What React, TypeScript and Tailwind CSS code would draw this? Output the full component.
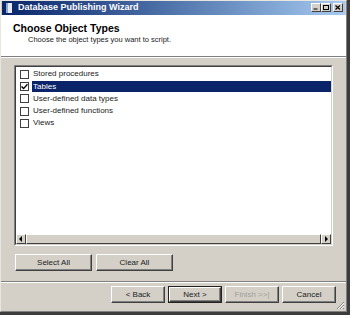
import React from "react";

const ITEMS = [
  { label: "Stored procedures", checked: false },
  { label: "Tables", checked: true },
  { label: "User-defined data types", checked: false },
  { label: "User-defined functions", checked: false },
  { label: "Views", checked: false },
];

function Check({ checked }: { checked: boolean }) {
  return (
    <div className="w-[9px] h-[9px] border border-[#404040] bg-white flex items-center justify-center shrink-0">
      {checked && (
        <svg width="7" height="7" viewBox="0 0 7 7">
          <path d="M0.5 3.5 L2.6 5.6 L6.5 1.2" stroke="#000" strokeWidth="1.4" fill="none" />
        </svg>
      )}
    </div>
  );
}

function Btn({
  children,
  w = "w-[77px]",
  def = false,
  disabled = false,
}: {
  children: React.ReactNode;
  w?: string;
  def?: boolean;
  disabled?: boolean;
}) {
  return (
    <div className={`${w} h-[17px] ${def ? "border border-[#222]" : ""}`}>
      <div className="h-full border border-t-white border-l-white border-r-[#404040] border-b-[#404040] bg-[#d4d0c8] shadow-[inset_-1px_-1px_0_#808080] flex items-center justify-center">
        <span className={`text-[8px] leading-none ${disabled ? "text-[#a19e96]" : "text-[#222]"}`}>
          {children}
        </span>
      </div>
    </div>
  );
}

export default function App() {
  return (
    <div className="w-[354px] h-[318px] bg-white" style={{ fontFamily: '"Liberation Sans", Arial, sans-serif' }}>
      <div className="w-[350px] h-[315px] border-r-[3px] border-b-[3px] border-r-[#3c3c3c] border-b-[#3c3c3c]">
        <div className="w-full h-full bg-[#d4d0c8] border border-t-[#e8e6e0] border-l-[#e8e6e0] border-r-[#808080] border-b-[#808080] flex flex-col">
          {/* Title bar */}
          <div className="h-[14px] mx-px bg-gradient-to-r from-[#0a246a] to-[#a6caf0] flex items-center pl-[4px] pr-[2px]">
            <div className="w-[6px] h-[10px] bg-[#e6ecf6] border-l-[2px] border-[#8fa6cc] mr-[6px]" />
            <span className="text-white font-bold text-[9px] leading-none">Database Publishing Wizard</span>
            <div className="ml-auto flex items-center">
              {["min", "max", "close"].map((k) => (
                <div
                  key={k}
                  className={`w-[10px] h-[9px] bg-[#d4d0c8] border border-t-white border-l-white border-r-[#404040] border-b-[#404040] flex items-center justify-center ${
                    k === "close" ? "ml-[2px]" : ""
                  }`}
                >
                  <svg width="6" height="5" viewBox="0 0 6 5">
                    {k === "min" && <rect x="0.5" y="3.5" width="4" height="1" fill="#000" />}
                    {k === "max" && (
                      <rect x="0.5" y="0.5" width="5" height="4" fill="none" stroke="#000" strokeWidth="1" />
                    )}
                    {k === "close" && <path d="M0.5 0.5 L5 4.5 M5 0.5 L0.5 4.5" stroke="#000" strokeWidth="1.2" />}
                  </svg>
                </div>
              ))}
            </div>
          </div>

          {/* Header */}
          <div className="h-[43px] bg-white border-b border-b-[#808080] pl-[12px] pt-[8px]">
            <div className="text-[10.5px] font-bold text-black leading-none">Choose Object Types</div>
            <div className="text-[7.5px] text-[#222] leading-none mt-[3px] pl-[15px]">
              Choose the object types you want to script.
            </div>
          </div>
          <div className="h-px bg-white" />

          {/* Body */}
          <div className="flex-1 flex flex-col px-[13px] pt-[7px]">
            <div className="h-[181px] border border-t-[#808080] border-l-[#808080] border-r-white border-b-white">
              <div className="h-full border border-t-[#404040] border-l-[#404040] border-r-[#d4d0c8] border-b-[#d4d0c8] bg-white flex flex-col">
                <div className="flex-1 pt-[1px]">
                  {ITEMS.map((it) => {
                    const sel = it.label === "Tables";
                    return (
                      <div key={it.label} className="h-[12.2px] flex items-center pl-[4px]">
                        <Check checked={it.checked} />
                        <div
                          className={`ml-[3px] flex-1 h-[11px] flex items-center pl-[1px] ${
                            sel ? "bg-[#0a246a] text-white" : "text-[#222]"
                          }`}
                        >
                          <span className="text-[8px] leading-none">{it.label}</span>
                        </div>
                      </div>
                    );
                  })}
                </div>
                {/* horizontal scrollbar */}
                <div className="h-[10px] flex bg-[#e6e3de]">
                  <div className="w-[10px] h-full bg-[#d4d0c8] border border-t-white border-l-white border-r-[#404040] border-b-[#404040] flex items-center justify-center">
                    <svg width="4" height="6" viewBox="0 0 4 6">
                      <path d="M3 0 L0 3 L3 6 Z" fill="#000" />
                    </svg>
                  </div>
                  <div className="flex-1 h-full bg-[#d4d0c8] border border-t-white border-l-white border-r-[#404040] border-b-[#404040]" />
                  <div className="w-[10px] h-full bg-[#d4d0c8] border border-t-white border-l-white border-r-[#404040] border-b-[#404040] flex items-center justify-center">
                    <svg width="4" height="6" viewBox="0 0 4 6">
                      <path d="M1 0 L4 3 L1 6 Z" fill="#000" />
                    </svg>
                  </div>
                </div>
              </div>
            </div>

            <div className="flex gap-[4px] mt-[8px] pl-[1px]">
              <Btn>Select All</Btn>
              <Btn>Clear All</Btn>
            </div>
          </div>

          {/* Separator */}
          <div className="h-px bg-[#808080] mt-[10px]" />
          <div className="h-px bg-white" />

          {/* Footer */}
          <div className="flex items-start justify-end gap-[3px] pr-[10px] pt-[3px] h-[28px] relative">
            <Btn w="w-[54px]">&lt; Back</Btn>
            <Btn w="w-[54px]" def>
              Next &gt;
            </Btn>
            <Btn w="w-[54px]" disabled>
              Finish &gt;&gt;|
            </Btn>
            <Btn w="w-[54px]">Cancel</Btn>
            <svg className="absolute right-[1px] bottom-[1px]" width="10" height="10" viewBox="0 0 10 10">
              <path d="M9 2 L2 9 M9 5 L5 9 M9 8 L8 9" stroke="#808080" strokeWidth="1" />
              <path d="M9 3 L3 9 M9 6 L6 9" stroke="#fff" strokeWidth="1" />
            </svg>
          </div>
        </div>
      </div>
    </div>
  );
}
